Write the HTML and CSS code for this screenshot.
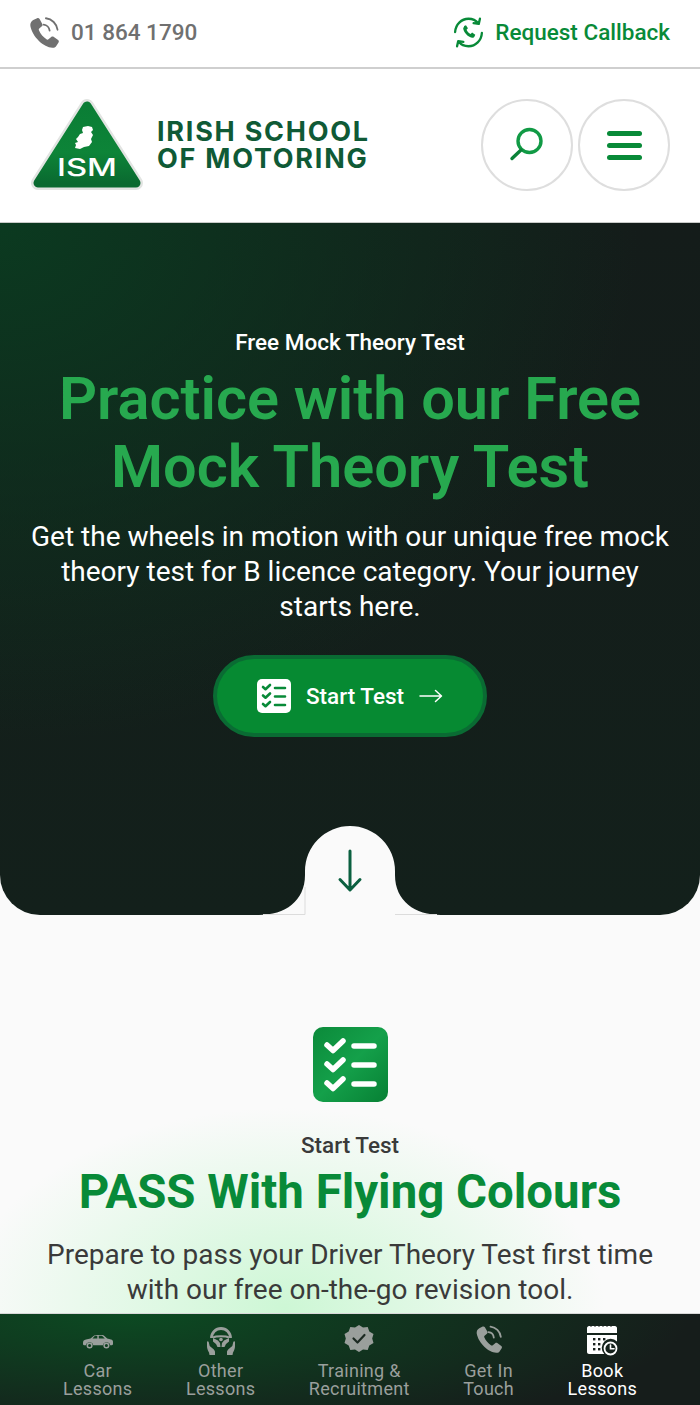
FILE: index.html
```html
<!DOCTYPE html>
<html lang="en">
<head>
    <meta charset="UTF-8">
    <meta name="viewport" content="width=device-width, initial-scale=1.0">
    <title>Free Mock Theory Test - Irish School of Motoring</title>
    <link rel="stylesheet" href="styles.css">
</head>
<body>
    <!-- Top contact bar -->
    <div class="top-bar">
        <a class="top-link phone" href="#">
            <svg class="top-icon" viewBox="2.500 1.500 27.500 27.500">
                <path fill="#707070" d="M6.300 4.200 9.700 2.600c.9-.4 1.700-.1 2.200.7l2.400 4.300c.4.800.3 1.600-.4 2.200l-2.300 2c-.5.400-.6.900-.3 1.500 1.400 3.300 3.800 6.200 7 8.100.5.300 1 .2 1.500-.2l2.400-2c.6-.5 1.400-.6 2.100-.1l4 2.900c.7.500.9 1.400.4 2.200l-2 3c-.7 1.100-2 1.800-3.400 1.500C15.900 28.800 5.500 19.300 3.700 9.500c-.3-2.300.8-4.400 2.600-5.300z"/>
                <path fill="none" stroke="#707070" stroke-width="1.600" stroke-linecap="round" d="M15.500 8.200c2.800.3 5 2.600 5.300 5.400M17.500 2.600c5.300.6 9.600 4.900 10.300 10.200"/>
            </svg>
            <span>01 864 1790</span>
        </a>
        <a class="top-link callback" href="#">
            <svg class="top-icon" viewBox="0 0 32 32">
                <path fill="none" stroke="#088a38" stroke-width="2.400" stroke-linecap="round" stroke-linejoin="round" d="M2.200 15.500C2.600 7.900 8.600 1.800 16 1.800c4.200 0 7.900 1.900 10.400 4.900M29.800 16.500c-.4 7.600-6.400 13.700-13.800 13.700-4.200 0-7.900-1.900-10.400-4.900M27.800 1.800l-1.200 5.300-5.300-.8M4.200 30.200l1.200-5.300 5.300.8"/>
                <path fill="#088a38" d="M11.400 9.200l2-.8 2 3.300-1.400 1.500c.7 1.900 2.300 3.500 4.200 4.300l1.500-1.400 3.300 2.100-.8 2c-.5 1-1.500 1.500-2.600 1.200-4.200-1-8-4.800-9-9.100-.2-1 .3-1.700.8-2.100z"/>
            </svg>
            <span>Request Callback</span>
        </a>
    </div>

    <!-- Logo and round buttons -->
    <header class="site-header">
        <a class="logo" href="#">
            <svg class="logo-mark" viewBox="0 0 114 94">
                <defs>
                    <linearGradient id="logoGreen" x1="0" y1="0" x2="0" y2="1">
                        <stop offset="0" stop-color="#0a7d35"/>
                        <stop offset="0.6" stop-color="#0d8438"/>
                        <stop offset="1" stop-color="#0a6a30"/>
                    </linearGradient>
                </defs>
                <polygon points="57,8 8,85 106,85" fill="#e2e4e2" stroke="#e2e4e2" stroke-width="14" stroke-linejoin="round"/>
                <polygon points="57,8 8,85 106,85" fill="url(#logoGreen)" stroke="url(#logoGreen)" stroke-width="9" stroke-linejoin="round"/>
                <path fill="#fff" d="M53 29l5-1 4 1 1 3-2 2 2 3-2 4 1 3-3 4-5 1-4 2-5-1 1-3-1-2 3-1-2-3 2-2 2-3 3-1-1-3z"/>
                <text class="logo-initials" x="57" y="78" text-anchor="middle" textLength="60" lengthAdjust="spacingAndGlyphs">ISM</text>
            </svg>
            <span class="logo-text">IRISH SCHOOL<br>OF MOTORING</span>
        </a>
        <div class="round-buttons">
            <button class="round-btn" aria-label="Search">
                <svg viewBox="0 0 40 40" width="40" height="40">
                    <circle cx="22.500" cy="16" r="11.500" fill="none" stroke="#119a45" stroke-width="3.400"/>
                    <path d="M14 25 5 33.500" stroke="#0b8238" stroke-width="3.400" stroke-linecap="round"/>
                </svg>
            </button>
            <button class="round-btn" aria-label="Menu">
                <span class="burger"><i></i><i></i><i></i></span>
            </button>
        </div>
    </header>

    <main>
        <section class="hero">
            <p class="eyebrow">Free Mock Theory Test</p>
            <h1>Practice with our Free Mock Theory Test</h1>
            <p class="hero-text">Get the wheels in motion with our unique free mock theory test for B licence category. Your journey starts here.</p>
            <a class="start-btn" href="#">
                <svg class="start-icon" viewBox="0 0 34 34">
                    <rect width="34" height="34" rx="5" fill="#fff"/>
                    <g fill="none" stroke="#088a38" stroke-width="2.600" stroke-linecap="round" stroke-linejoin="round">
                        <path d="M6 8l2.500 2.200L13 6M6 16.500l2.500 2.200 4.500-4.200M6 25l2.500 2.200 4.500-4.200"/>
                        <path d="M18 9h10M18 17.500h10M18 26h10"/>
                    </g>
                </svg>
                <span>Start Test</span>
                <svg class="start-arrow" viewBox="0 0 24 14">
                    <path d="M1 7h21M16.500 1.500 22.500 7l-6 5.500" fill="none" stroke="#fff" stroke-width="1.500" stroke-linecap="round" stroke-linejoin="round"/>
                </svg>
            </a>
            <svg class="scroll-notch" viewBox="0 0 190 90">
                <path fill="#fafafa" d="M4 90C30 90 50 76 50 50V46A45 45 0 0 1 140 46V50C140 76 160 90 186 90Z"/>
                <path d="M50 62V89.500H8M140 89.500H182" fill="none" stroke="#dcdcdc"/>
                <path d="M95 26V64M85 54.500 95 65 105 54.500" fill="none" stroke="#0b6040" stroke-width="3" stroke-linecap="round" stroke-linejoin="round"/>
            </svg>
        </section>

        <section class="intro">
            <svg class="intro-icon" viewBox="0 0 75 75">
                <defs>
                    <linearGradient id="iconGreen" x1="0" y1="0" x2="1" y2="1">
                        <stop offset="0" stop-color="#0b8a3a"/>
                        <stop offset="0.5" stop-color="#14a04a"/>
                        <stop offset="1" stop-color="#078034"/>
                    </linearGradient>
                </defs>
                <rect width="75" height="75" rx="10" fill="url(#iconGreen)"/>
                <g fill="none" stroke="#fff" stroke-linecap="round" stroke-linejoin="round" stroke-width="5.500">
                    <path d="M14 18l6 5.500L30 14M14 37l6 5.500L30 33M14 56l6 5.500L30 52"/>
                    <path d="M41 19H61M41 38H61M41 57H61"/>
                </g>
            </svg>
            <p class="intro-label">Start Test</p>
            <h2>PASS With Flying Colours</h2>
            <p class="intro-text">Prepare to pass your Driver Theory Test first time with our free on-the-go revision tool.</p>
        </section>
    </main>

    <!-- Bottom navigation -->
    <nav class="bottom-nav">
        <a class="nav-item" href="#">
            <svg viewBox="0 0 32 32">
                <path fill="currentColor" d="M1 19c0-2 1-3 3-3.400l4.500-1 3.700-3c.6-.4 1.200-.6 2-.6h6c.9 0 1.600.3 2.200.9l2.800 2.700 3.800.8c1.200.3 2 1.100 2 2.300V20c0 .7-.5 1.200-1.200 1.200h-1.600a3.700 3.700 0 0 0-7.200 0H11.200a3.700 3.700 0 0 0-7.200 0H2c-.6 0-1-.5-1-1.200zM10.500 14.500h4.800v-2.700h-1.500c-.5 0-.9.100-1.300.4zM16.800 14.500h6l-2-2.100c-.3-.4-.7-.6-1.200-.6h-2.800z"/>
                <circle cx="7.600" cy="21.500" r="2.300" fill="none" stroke="currentColor" stroke-width="1.500"/>
                <circle cx="24.400" cy="21.500" r="2.300" fill="none" stroke="currentColor" stroke-width="1.500"/>
            </svg>
            <span>Car<br>Lessons</span>
        </a>
        <a class="nav-item" href="#">
            <svg viewBox="0 0 32 32">
                <path fill="none" stroke="currentColor" stroke-width="2.800" d="M6.500 14a9.500 9.500 0 0 1 19 0"/>
                <path fill="none" stroke="currentColor" stroke-width="2" d="M8 13.500c3-1.800 13-1.800 16 0"/>
                <path fill="currentColor" d="M8 14l5 2.500 2 2.500 .5 4-3 0-1.500-3-3-2.500zM24 14l-5 2.500-2 2.500-.5 4 3 0 1.500-3 3-2.500z"/>
                <circle cx="16" cy="15.500" r="1.800" fill="currentColor"/>
                <path fill="currentColor" d="M2 18c0-1 1.400-1 1.700 0l1 4 3 2.500c1.300 1 2.300 2.200 2.300 3.500v3H4.500l-.5-2.500C2.500 26 2 24 2 22zM30 18c0-1-1.400-1-1.700 0l-1 4-3 2.500c-1.300 1-2.300 2.200-2.300 3.500v3h5.500l.5-2.500c1.500-2.500 2-4.500 2-6.500z"/>
            </svg>
            <span>Other<br>Lessons</span>
        </a>
        <a class="nav-item" href="#">
            <svg viewBox="0 0 32 32">
                <path fill="currentColor" d="M16 1l4 2.600 4.700-.5 1.600 4.500 4.200 2.300-1.300 4.600 1.300 4.600-4.200 2.300-1.600 4.500-4.700-.5L16 28l-4-2.600-4.700.5-1.600-4.500-4.200-2.300 1.300-4.600-1.300-4.600 4.200-2.300 1.600-4.500 4.700.5z"/>
                <path d="M10.500 14.500l4 4 7-7.500" fill="none" stroke="#1c2a22" stroke-width="2.200" stroke-linecap="round" stroke-linejoin="round"/>
            </svg>
            <span>Training &amp;<br>Recruitment</span>
        </a>
        <a class="nav-item" href="#">
            <svg viewBox="0 0 32 32">
                <path fill="currentColor" d="M6.300 4.200 9.700 2.600c.9-.4 1.700-.1 2.200.7l2.400 4.300c.4.800.3 1.600-.4 2.200l-2.300 2c-.5.400-.6.900-.3 1.500 1.400 3.300 3.800 6.200 7 8.100.5.300 1 .2 1.500-.2l2.400-2c.6-.5 1.400-.6 2.100-.1l4 2.900c.7.500.9 1.400.4 2.200l-2 3c-.7 1.100-2 1.800-3.400 1.500C15.900 28.800 5.500 19.300 3.700 9.500c-.3-2.300.8-4.400 2.600-5.300z"/>
                <path fill="none" stroke="currentColor" stroke-width="1.800" stroke-linecap="round" d="M15.500 8.200c2.800.3 5 2.600 5.300 5.400M17.500 2.600c5.300.6 9.600 4.900 10.300 10.200"/>
            </svg>
            <span>Get In<br>Touch</span>
        </a>
        <a class="nav-item active" href="#">
            <svg viewBox="0 0 32 32">
                <path fill="currentColor" d="M3 2h26c1 0 2 1 2 2v5H1V4c0-1 1-2 2-2zM1 11h30v6.500a8 8 0 0 0-12.700 12.500H3c-1 0-2-1-2-2z"/>
                <g fill="#1a221f">
                    <circle cx="5" cy="1.800" r=".9"/><circle cx="9" cy="1.800" r=".9"/><circle cx="13" cy="1.800" r=".9"/><circle cx="17" cy="1.800" r=".9"/><circle cx="21" cy="1.800" r=".9"/><circle cx="25" cy="1.800" r=".9"/>
                    <rect x="7" y="14" width="2.400" height="2.400"/><rect x="12" y="14" width="2.400" height="2.400"/><rect x="17" y="14" width="2.400" height="2.400"/>
                    <rect x="7" y="19" width="2.400" height="2.400"/><rect x="12" y="19" width="2.400" height="2.400"/>
                    <rect x="7" y="24" width="2.400" height="2.400"/><rect x="12" y="24" width="2.400" height="2.400"/>
                </g>
                <circle cx="24.500" cy="24.500" r="6" fill="none" stroke="currentColor" stroke-width="1.800"/>
                <path d="M24.500 21v3.800H28" fill="none" stroke="currentColor" stroke-width="1.600" stroke-linecap="round"/>
            </svg>
            <span>Book<br>Lessons</span>
        </a>
    </nav>
</body>
</html>
```

FILE: styles.css
```css
/* Reset and Base Styles */
* {
    margin: 0;
    padding: 0;
    box-sizing: border-box;
    font-family: Roboto, 'Liberation Sans', sans-serif;
}

html, body {
    height: 100%;
}

body {
    background: #fafafa;
    display: flex;
    flex-direction: column;
    overflow: hidden;
}

a {
    text-decoration: none;
}

/* Top Bar */
.top-bar {
    flex: none;
    height: 69px;
    padding: 0 30px 3px 29px;
    display: flex;
    justify-content: space-between;
    align-items: center;
    background: #ffffff;
    border-bottom: 2px solid #cfcfcf;
}

.top-link {
    display: flex;
    align-items: center;
    gap: 11px;
    font-size: 22.5px;
    font-weight: 500;
}

.top-icon {
    width: 31px;
    height: 31px;
}

.phone {
    color: #707070;
}

.callback {
    color: #088a38;
}

/* Logo Header */
.site-header {
    flex: none;
    height: 154px;
    padding: 0 30px 1px;
    display: flex;
    justify-content: space-between;
    align-items: center;
    background: #ffffff;
    border-bottom: 1px solid #c9cbc9;
}

.logo {
    display: flex;
    align-items: center;
    gap: 13px;
}

.logo-mark {
    width: 114px;
    height: 94px;
}

.logo-initials {
    font-family: Inter, sans-serif;
    font-size: 24px;
    font-weight: 500;
    fill: #ffffff;
}

.logo-text {
    font-family: Inter, sans-serif;
    font-size: 27px;
    line-height: 27px;
    font-weight: 700;
    letter-spacing: 1.750px;
    white-space: nowrap;
    color: #0f5a36;
}

.round-buttons {
    display: flex;
    gap: 5px;
}

.round-btn {
    width: 92px;
    height: 92px;
    border: 2px solid #dedede;
    border-radius: 50%;
    background: #ffffff;
    display: flex;
    align-items: center;
    justify-content: center;
}

.burger {
    display: flex;
    flex-direction: column;
    gap: 7px;
}

.burger i {
    display: block;
    width: 35px;
    height: 5px;
    border-radius: 3px;
    background: #088a38;
}

/* Main Content */
main {
    flex: 1;
    min-height: 0;
    overflow: hidden;
    background:
        radial-gradient(ellipse 320px 200px at 285px 1085px, #cdf7d5 0%, rgba(205, 247, 213, 0) 100%),
        #fafafa;
}

/* Hero */
.hero {
    position: relative;
    height: 692px;
    padding: 107px 20px 0;
    text-align: center;
    color: #ffffff;
    border-radius: 0 0 40px 40px;
    background:
        radial-gradient(ellipse 640px 520px at 0 0, #0b3a20 0%, rgba(11, 58, 32, 0) 100%),
        linear-gradient(#141c1a, #13201b);
}

.eyebrow {
    font-size: 22.500px;
    line-height: 24px;
    font-weight: 500;
}

h1 {
    margin-top: 11px;
    font-size: 59.500px;
    line-height: 68px;
    font-weight: 600;
    color: #27a94f;
}

.hero-text {
    margin: 18px 10px 0;
    font-size: 28px;
    line-height: 35px;
}

.start-btn {
    width: 274px;
    height: 82px;
    margin-top: 31px;
    display: inline-flex;
    align-items: center;
    justify-content: center;
    gap: 15px;
    color: #ffffff;
    font-size: 22.500px;
    font-weight: 500;
    background: #068a32;
    border: 4px solid #0a6b33;
    border-radius: 41px;
}

.start-icon {
    width: 34px;
    height: 34px;
}

.start-arrow {
    width: 24px;
    height: 14px;
}

.scroll-notch {
    position: absolute;
    left: 255px;
    bottom: 0;
    width: 190px;
    height: 90px;
}

/* Intro Section */
.intro {
    padding: 112px 20px 0;
    text-align: center;
}

.intro-icon {
    display: block;
    width: 75px;
    height: 75px;
    margin: 0 auto;
}

.intro-label {
    margin-top: 30px;
    font-size: 22.500px;
    line-height: 26px;
    font-weight: 500;
    color: #3a3a3a;
}

h2 {
    margin-top: 6px;
    font-size: 47.400px;
    line-height: 56px;
    font-weight: 700;
    color: #088a38;
}

.intro-text {
    margin: 17px 20px 0;
    font-size: 28px;
    line-height: 35px;
    color: #3a3a3a;
}

/* Bottom Navigation */
.bottom-nav {
    flex: none;
    height: 92px;
    padding: 10px 63px 0;
    display: flex;
    justify-content: space-between;
    background:
        radial-gradient(ellipse 560px 130px at 130px 0, #0c4a22 0%, rgba(12, 74, 34, 0) 100%),
        #161d1b;
    border-top: 1px solid #d8d8d8;
}

.nav-item {
    display: flex;
    flex-direction: column;
    align-items: center;
    gap: 6px;
    color: #9a9f9c;
    font-size: 18px;
    letter-spacing: .3px;
    line-height: 18px;
    text-align: center;
}

.nav-item svg {
    width: 32px;
    height: 32px;
}

.nav-item.active {
    color: #ffffff;
}
```
